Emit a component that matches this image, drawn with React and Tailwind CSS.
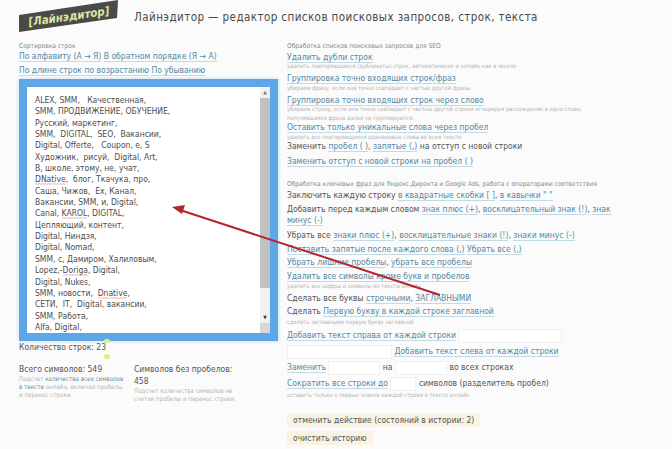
const LINES = [
  'ALEX, SMM,   Качественная,',
  'SMM, ПРОДВИЖЕНИЕ, ОБУЧЕНИЕ,',
  'Русский, маркетинг,',
  'SMM,  DIGITAL,  SEO,  Вакансии,',
  'Digital, Offerte,   Coupon, e, S',
  'Художник,  рисуй,  Digital, Art,',
  'В, школе, этому, не, учат,',
  <><Typo>DNative</Typo>,  блог, Ткачука, про,</>,
  'Саша, Чижов,  Ex, Канал,',
  'Вакансии, SMM, и, Digital,',
  <>Canal, <Typo>KAROL</Typo>, DIGITAL,</>,
  'Цепляющий, контент,',
  'Digital, Ниндзя,',
  'Digital, Nomad,',
  'SMM, с, Дамиром, Халиловым,',
  <>Lopez,-<Typo>Doriga</Typo>, Digital,</>,
  'Digital, Nukes,',
  <>SMM, новости,  <Typo>Dnative</Typo>,</>,
  'СЕТИ,  IT,  Digital, вакансии,',
  'SMM, Работа,',
  'Alfa, Digital,',
];

// красная волна проверки орфографии
function Typo({ children }) {
  const id = `wave-${String(children)}`;
  return (
    <span className="relative inline-block">
      {children}
      <svg width="100%" height="2" className="absolute left-0 bottom-[0.5px]">
        <defs>
          <pattern id={id} width="3" height="2" patternUnits="userSpaceOnUse">
            <path d="M0 1.5 L1.5 0.5 L3 1.5" fill="none" stroke="#d9797c" strokeWidth="0.6" />
          </pattern>
        </defs>
        <rect width="100%" height="2" fill={`url(#${id})`} />
      </svg>
    </span>
  );
}

function A({ children }) {
  return <span className="text-[#5289a5] border-b border-[#c3d9e3]">{children}</span>;
}

function Note({ children, className = '' }) {
  return <div className={`text-[5.8px] leading-[8px] text-[#b5b5b5] ${className}`}>{children}</div>;
}

function Heading({ children, className = '' }) {
  return <div className={`text-[6.6px] leading-[9px] text-[#888] ${className}`}>{children}</div>;
}

function Field({ className }) {
  return <span className={`inline-block h-[14px] -my-[2px] bg-white border border-[#f0f0f0] align-middle ${className}`} />;
}

function Logo() {
  return (
    <svg width="100" height="33" viewBox="0 0 100 33" className="block">
      <polygon points="0,15 99,0 98,18 0,32" fill="#4a4a46" />
      <text
        x="10"
        y="26"
        transform="rotate(-8 10 26)"
        fontFamily="'DejaVu Sans Condensed', 'DejaVu Sans', sans-serif"
        fontStyle="italic"
        fontWeight="700"
        fontSize="11.5"
        fill="#d9e6a6"
      >
        [Лайнэдитор]
      </text>
    </svg>
  );
}

function Arrow() {
  return (
    <svg width="672" height="449" className="absolute left-0 top-0 pointer-events-none">
      <line x1="440" y1="295" x2="180" y2="210" stroke="#b3262e" strokeWidth="2" />
      <polygon points="172,207 185,205 182,214" fill="#b3262e" />
    </svg>
  );
}

function Scrollbar() {
  return (
    <div className="w-[10px] shrink-0 bg-[#f1f1f1] flex flex-col items-center">
      <div className="h-[11px] flex items-center justify-center text-[5px] text-[#777]">▲</div>
      <div className="w-full h-[190px] bg-[#c1c1c1]" />
      <div className="flex-1" />
      <div className="h-[11px] flex items-center justify-center text-[5px] text-[#333]">▼</div>
      <div className="w-full h-[10px] bg-[#d8d8d8]" />
    </div>
  );
}

export default function App() {
  return (
    <div className="relative w-[672px] h-[449px] overflow-hidden bg-[#fbfbfb] text-[#555] font-['DejaVu_Sans_Condensed','DejaVu_Sans',sans-serif]">
      <header className="flex pl-[19px] h-[33px]">
        <Logo />
        <h1 className="ml-[15px] mt-[10px] text-[11.5px] leading-[14px] font-normal tracking-[0.43px] text-[#4a4a4a] whitespace-nowrap">
          Лайнэдитор — редактор списков поисковых запросов, строк, текста
        </h1>
      </header>

      <div className="flex pl-[19px] mt-[8.5px]">
        <section className="w-[259px] shrink-0">
          <Heading>Сортировка строк</Heading>
          <div className="text-[8.5px] leading-[11px]"><A>По алфавиту (А → Я)</A> <A>В обратном порядке (Я → А)</A></div>
          <div className="mt-[3px] text-[8.5px] leading-[11px]"><A>По длине строк по возрастанию</A> <A>По убыванию</A></div>

          <div className="mt-[3.5px] h-[262px] bg-[#5ea6e6] p-[8px] shadow-[0_0_4px_#b9d9f2]">
            <div className="h-full bg-white flex overflow-hidden">
              <div className="flex-1 pl-[8px] pt-[8px] text-[8.5px] leading-[11.35px] text-[#4d4d4d] whitespace-pre">
                {LINES.map((l, i) => <div key={i}>{l}</div>)}
              </div>
              <Scrollbar />
            </div>
          </div>

          <div className="text-[8.5px] leading-[12px]">Количество строк: 23</div>

          <div className="flex mt-[10px]">
            <div className="w-[115px] shrink-0">
              <div className="text-[8.5px] leading-[12px]">Всего символов: 549</div>
              <Note className="text-[6.2px] w-[108px]">
                Подсчет <span className="text-[#5f8ea6]">количества всех символов в тексте</span> онлайн, включая пробелы и перенос строки
              </Note>
            </div>
            <div className="w-[105px]">
              <div className="text-[8.5px] leading-[12px]">Символов без пробелов: 458</div>
              <Note className="text-[6.2px]">Подсчет количества символов не считая пробелы и перенос строки</Note>
            </div>
          </div>
        </section>

        <section className="ml-[9px] w-[300px] shrink-0 text-[8.5px] leading-[12px] whitespace-nowrap">
          <Heading>Обработка списков поисковых запросов для SEO</Heading>
          <div className="mt-[0.5px]"><A>Удалить дубли строк</A></div>
          <Note className="-mt-[1px]">удалить повторяющиеся (дубликаты) строк, автоматически и онлайн как в экселе</Note>
          <div className="mt-[2px]"><A>Группировка точно входящих строк/фраз</A></div>
          <Note>убираем фразу, если она точно совпадает с частью другой фразы</Note>
          <div className="mt-[2px]"><A>Группировка точно входящих строк через слово</A></div>
          <Note className="-mt-[1px]">убираем строку, если она точно совпадает с частью другой строки игнорируя расхождение в одно слово,</Note>
          <Note className="mt-[1px]">получившаяся фраза далее не группируются.</Note>
          <div className="-mt-[1px]"><A>Оставить только уникальные слова через пробел</A></div>
          <Note>удалить все повторяющиеся одинаковые слова во всем тексте</Note>
          <div className="-mt-[1px]">Заменить <A>пробел ( )</A>, <A>запятые (,)</A> на отступ с новой строки</div>
          <div className="mt-[3px]"><A>Заменить отступ с новой строки на пробел ( )</A></div>

          <Heading className="mt-[12.5px]">Обработка ключевых фраз для Яндекс.Директа и Google Ads, работа с операторами соответствия</Heading>
          <div className="mt-[0.5px]">Заключить каждую строку <A>в квадратные скобки [ ]</A>, <A>в кавычки " "</A></div>
          <div className="mt-[2px]">Добавить перед каждым словом <A>знак плюс (+)</A>, <A>восклицательный знак (!)</A>, <A>знак</A></div>
          <div className="-mt-[1px]"><A>минус (-)</A></div>
          <div className="mt-[3px]">Убрать все <A>знаки плюс (+)</A>, <A>восклицательные знаки (!)</A>, <A>знаки минус (-)</A></div>
          <div className="mt-[2px]"><A>Поставить запятые после каждого слова (,)</A> <A>Убрать все (,)</A></div>
          <div className="mt-[1px]"><A>Убрать лишние пробелы</A>, <A>убрать все пробелы</A></div>
          <div className="mt-[2px]"><A>Удалить все символы кроме букв и пробелов</A></div>
          <Note>удалить все цифры и символы из текста онлайн</Note>
          <div className="mt-[2px]">Сделать все буквы <A>строчными</A>, <A>ЗАГЛАВНЫМИ</A></div>
          <div className="mt-[1px]">Сделать <A>Первую букву в каждой строке заглавной</A></div>
          <Note className="mt-[1px]">сделать заглавными первую букву заглавной</Note>
          <div className="mt-[3px]"><A>Добавить текст справа от каждой строки</A> <Field className="w-[104px]" /></div>
          <div className="mt-[4px]"><Field className="w-[105px]" /> <A>Добавить текст слева от каждой строки</A></div>
          <div className="mt-[4px]"><A>Заменить</A> <Field className="w-[52px]" /> на <Field className="w-[52px]" /> во всех строках</div>
          <div className="mt-[4px]"><A>Сократить все строки до</A> <Field className="w-[26px]" /> символов (разделитель пробел)</div>
          <Note className="mt-[2px]">оставить только x первых знаков каждой строки в тексте онлайн</Note>

          <button className="block mt-[14px] h-[14px] px-[6px] bg-[#f8f3e3] text-[8.5px] leading-[14px] text-[#555]">отменить действие (состояний в истории: 2)</button>
          <button className="block mt-[4px] h-[14px] px-[6px] bg-[#f8f3e3] text-[8.5px] leading-[14px] text-[#555]">очистить историю</button>
        </section>
      </div>

      <Arrow />
      <span className="absolute left-[104px] top-[339px] w-[6px] h-[4px] rounded-full bg-[#dcec8a]" />
      <span className="absolute left-[104px] top-[354px] w-[6px] h-[5px] rounded-full bg-[#dcec8a]" />
    </div>
  );
}
